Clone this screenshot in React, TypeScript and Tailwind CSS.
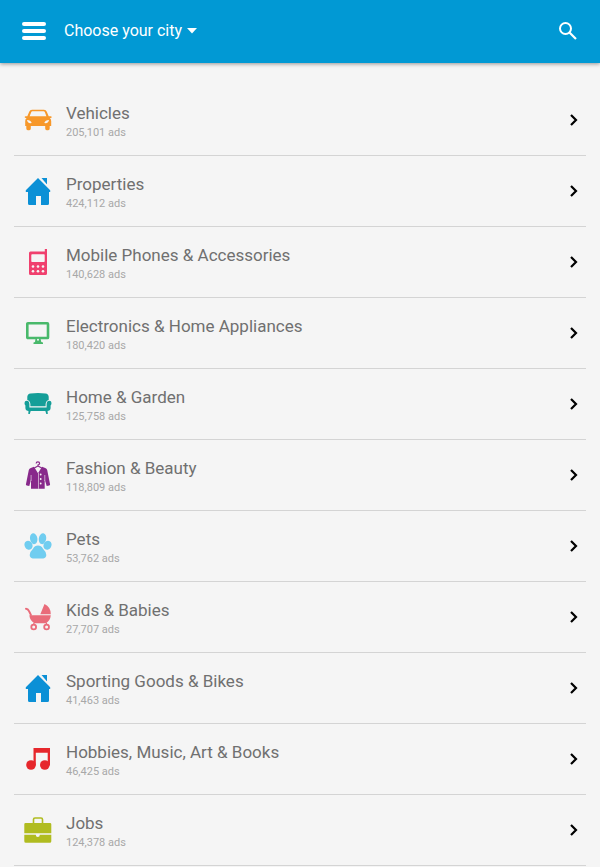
import type { ReactNode } from "react";

const house = (
  <g fill="#0b90d6">
    <path d="M14 1 1.800 13.200V15H4v11.500Q4 28 5.500 28H12v-9h5v9h6.500q1.500 0 1.500-1.500V15h1.200v-1.800z" />
    <path d="M17.500 1H23v6.500z" />
    <path d="m15.800 1 8.700 8.700" stroke="#f5f5f5" strokeWidth="1" />
  </g>
);

const car = (
  <g fill="#f7982a">
    <path d="M8 3.800h12q2 0 2.800 2l1.900 4.500h1.900q1.200 0 1.100.9t-1.300.8h-.6q1.400 1.200 1.400 3v5H1.200v-5q0-1.800 1.400-3H2q-1.200 0-1.300-.8t1.100-.9h1.500l1.900-4.500q.8-2 2.800-2z" />
    <path d="M2.300 18.500h4.500v4q0 1.700-1.500 1.700H3.800q-1.500 0-1.500-1.700zM21.200 18.500h4.500v4q0 1.700-1.500 1.700h-1.500q-1.500 0-1.500-1.700z" />
    <path d="M8.400 5.300h11.200q.9 0 1.300 1l1.500 4H5.600l1.600-4q.3-1 1.200-1z" fill="#f5f5f5" />
    <path d="M3 14q3.800 0 4.700 3-4.200.8-4.700-3zM25 14q-3.800 0-4.700 3 4.200.8 4.700-3z" fill="#f5f5f5" />
  </g>
);

const phone = (
  <g>
    <path d="M20.800 1H23v24.500q0 1.500-1.500 1.500h-15Q5 27 5 25.500V5q0-1.500 1.500-1.500h14.300z" fill="#f0406e" />
    <rect x="7.300" y="6.300" width="13.400" height="7.700" rx=".8" fill="#f5f5f5" />
    <g fill="#f5f5f5">
      <circle cx="9" cy="18.500" r="1.300" />
      <circle cx="14" cy="18.500" r="1.300" />
      <circle cx="19" cy="18.500" r="1.300" />
      <circle cx="9" cy="23.300" r="1.300" />
      <circle cx="14" cy="23.300" r="1.300" />
      <circle cx="19" cy="23.300" r="1.300" />
    </g>
  </g>
);

const monitor = (
  <g>
    <rect x="3.300" y="4.300" width="20.700" height="14.700" rx=".6" fill="none" stroke="#49b96b" strokeWidth="2.600" />
    <path d="M11.500 19.500h5l.8 3.500 1.700.6V25H9.500v-1.400l1.500-.6z" fill="#49b96b" />
    <circle cx="14" cy="20.800" r="1" fill="#f5f5f5" />
  </g>
);

const sofa = (
  <g fill="#149e98">
    <path d="M6.500 3.500q7.500-1 15 0 2.900.4 3.200 3.300v3.200q-2.600.6-3.100 4v2.200H6.400V14q-.5-3.400-3.100-4V6.800q.3-2.900 3.200-3.300z" />
    <path d="M.5 13q0-2.200 2.300-2.200T5.400 14v3.400h17.200V14q.3-3.200 2.600-3.200t2.300 2.200q0 1.500-.9 2.500v2.500q0 3-3.500 3H4.900q-3.500 0-3.500-3v-2.500Q.5 14.500.5 13z" />
    <path d="M4.500 20.500h2.300L5.800 24H4.300zM21.200 20.500h2.300l.3 3.500h-1.500z" />
  </g>
);

const coat = (
  <g>
    <path d="M12.200 2.600Q12.200.9 13.900.9t1.700 1.600q0 1.100-1.600 1.500V5l-3.700 2M14 5l3.700 2" fill="none" stroke="#88298b" strokeWidth="1.200" />
    <path d="M10 5.800 6.800 7Q5.300 7.500 4.800 9L1.900 23.500q0 .8.800.9l2.600.7L7 18.500v9.300h13.700v-9.300l2 6.600 2.600-.7q.8-.1.800-.9L23.200 9q-.5-1.500-2-2L18 5.800l-4 6.500z" fill="#88298b" />
    <path d="M7.100 14v6M20.800 14v6" stroke="#f5f5f5" strokeWidth=".6" />
    <path d="M14.500 12v15.800" stroke="#f5f5f5" strokeWidth=".6" />
    <g fill="#f5f5f5">
      <circle cx="16.700" cy="13.500" r=".9" />
      <circle cx="16.700" cy="18" r=".9" />
      <circle cx="16.700" cy="22.500" r=".9" />
    </g>
  </g>
);

const paw = (
  <g fill="#70cdf0">
    <ellipse cx="9.700" cy="6.700" rx="3.700" ry="5.500" transform="rotate(-10 9.700 6.700)" />
    <ellipse cx="18.500" cy="6.700" rx="3.700" ry="5.500" transform="rotate(10 18.500 6.700)" />
    <ellipse cx="4.500" cy="13.200" rx="3.900" ry="4.600" transform="rotate(-30 4.500 13.200)" />
    <ellipse cx="23.500" cy="13.200" rx="3.900" ry="4.600" transform="rotate(30 23.500 13.200)" />
    <path d="M14 13.500q3.300 0 5 3.300 3.300 3.200 3.300 6.200 0 3-3 3.400H8.700q-3-.4-3-3.400t3.300-6.200q1.700-3.300 5-3.300z" />
  </g>
);

const pram = (
  <g fill="#e96c7a">
    <path d="M2 5.700q1.900 0 2.900 2.200l2 4" fill="none" stroke="#e96c7a" strokeWidth="2" strokeLinecap="round" />
    <path d="M16.300 11.200 20.500 1q6.300 3 6.300 10.200zM5.300 12.200h21.500q-.4 5.300-5 8H10.500q-4.600-2.700-5.200-8z" />
    <path d="M10.500 19.500 9 22M22 19.500l1.200 2.500" stroke="#e96c7a" strokeWidth="1.200" />
    <g fill="none" stroke="#e96c7a" strokeWidth="1.800">
      <circle cx="9.700" cy="24" r="2.400" />
      <circle cx="22.600" cy="24" r="2.400" />
    </g>
  </g>
);

const music = (
  <g fill="#e6272c">
    <path d="M9.500 3H26v17.500h-2.300V7.800H11.800v12.700H9.500z" />
    <circle cx="7" cy="20" r="4.800" />
    <circle cx="20.800" cy="20" r="4.800" />
  </g>
);

const briefcase = (
  <g fill="#b0bc20">
    <path d="M9.500 7V3.500q0-1.500 1.500-1.500h6q1.500 0 1.500 1.500V7" fill="none" stroke="#b0bc20" strokeWidth="1.600" />
    <path d="M1.500 7H26q1.300 0 1.300 1.300v8.900H.3V8.300Q.3 7 1.500 7zM.3 18.700h11.500q0 2.300 2 2.300t2-2.300h11.500v6.500q0 1.500-1.500 1.500h-24q-1.500 0-1.500-1.500z" />
  </g>
);

type Category = { name: string; ads: string; icon: ReactNode };

const categories: Category[] = [
  { name: "Vehicles", ads: "205,101", icon: car },
  { name: "Properties", ads: "424,112", icon: house },
  { name: "Mobile Phones & Accessories", ads: "140,628", icon: phone },
  { name: "Electronics & Home Appliances", ads: "180,420", icon: monitor },
  { name: "Home & Garden", ads: "125,758", icon: sofa },
  { name: "Fashion & Beauty", ads: "118,809", icon: coat },
  { name: "Pets", ads: "53,762", icon: paw },
  { name: "Kids & Babies", ads: "27,707", icon: pram },
  { name: "Sporting Goods & Bikes", ads: "41,463", icon: house },
  { name: "Hobbies, Music, Art & Books", ads: "46,425", icon: music },
  { name: "Jobs", ads: "124,378", icon: briefcase },
];

function Header() {
  return (
    <header className="flex h-[63px] items-center bg-[#0199d4] px-[22px] pb-px text-white shadow-[0_1px_4px_rgba(0,0,0,0.4)]">
      <button type="button" aria-label="Menu" className="flex flex-col gap-[3px]">
        <span className="h-1 w-6 rounded-sm bg-white" />
        <span className="h-1 w-6 rounded-sm bg-white" />
        <span className="h-1 w-6 rounded-sm bg-white" />
      </button>
      <button type="button" className="ml-[18px] flex items-center gap-1 text-base">
        Choose your city
        <svg width="12" height="6" viewBox="0 0 12 6" fill="currentColor" aria-hidden="true">
          <path d="M1 0h10L6 5.500z" />
        </svg>
      </button>
      <button type="button" aria-label="Search" className="ml-auto">
        <svg width="20" height="20" viewBox="0 0 20 20" fill="none" stroke="currentColor" strokeWidth="2" aria-hidden="true">
          <circle cx="7.500" cy="7.500" r="5.500" />
          <path d="m11.500 11.500 6.500 6.500" strokeWidth="2.200" />
        </svg>
      </button>
    </header>
  );
}

function CategoryRow({ name, ads, icon }: Category) {
  return (
    <li className="border-b border-[#d4d4d4]">
      <a href="#" className="flex h-[70px] items-center pr-[7px] pl-[10px]">
        <svg width="28" height="28" viewBox="0 0 28 28" className="shrink-0" aria-hidden="true">
          {icon}
        </svg>
        <span className="ml-[14px] flex flex-col pt-[6px]">
          <span className="text-[17px] leading-5 text-[#707070]">{name}</span>
          <span className="text-[11px] leading-5 text-[#a8a8a8]">{ads} ads</span>
        </span>
        <svg width="10" height="14" viewBox="0 0 10 14" className="ml-auto shrink-0" aria-hidden="true">
          <path d="m2 2 5 5-5 5" fill="none" stroke="#000" strokeWidth="2.200" />
        </svg>
      </a>
    </li>
  );
}

export default function App() {
  return (
    <div className="min-h-screen bg-[#f5f5f5] font-[Roboto,sans-serif]">
      <Header />
      <main className="px-[14px] pt-[22px]">
        <ul>
          {categories.map((category) => (
            <CategoryRow key={category.name} {...category} />
          ))}
        </ul>
      </main>
    </div>
  );
}
